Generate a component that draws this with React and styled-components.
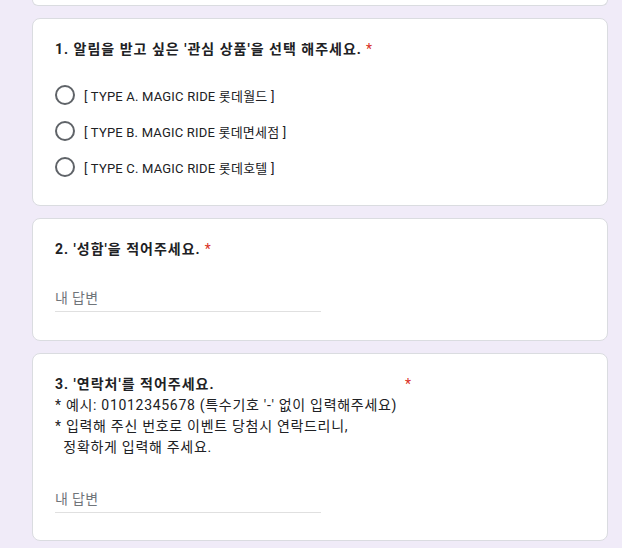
import React from 'react';
import styled, { createGlobalStyle } from 'styled-components';

const GlobalStyle = createGlobalStyle`
    html, body {
        margin: 0;
        padding: 0;
        background: #f0ebf8;
    }
    body {
        font-family: Roboto, 'Noto Sans CJK KR', sans-serif;
        color: #202124;
    }
`;

const Page = styled.div`
    width: 622px;
    height: 548px;
    overflow: hidden;
    padding-left: 32px;
    box-sizing: border-box;
`;

const Column = styled.div`
    width: 576px;
    display: flex;
    flex-direction: column;
    gap: 12px;
`;

// tail of the card above, cut off by the top of the window
const CardTail = styled.div`
    height: 6px;
    background: #fff;
    border: 1px solid #dadce0;
    border-top: none;
    border-radius: 0 0 8px 8px;
    box-sizing: border-box;
`;

const Card = styled.div`
    background: #fff;
    border: 1px solid #dadce0;
    border-radius: 8px;
    padding: 20px 22px 20px;
    box-sizing: border-box;
    height: ${(p) => p.$height}px;
`;

const Title = styled.div`
    font-size: 14px;
    line-height: 21px;
    font-weight: 700;
    letter-spacing: 1px;
    display: flex;
`;

const TitleText = styled.span`
    display: inline-block;
    width: ${(p) => (p.$width ? `${p.$width}px` : 'auto')};
`;

const Required = styled.span`
    color: #d93025;
    font-weight: 400;
    margin-left: 4px;
`;

const Description = styled.div`
    font-size: 14px;
    line-height: 21px;
    letter-spacing: 0.7px;
    white-space: pre-wrap;
`;

const Options = styled.div`
    margin-top: 17px;
    display: flex;
    flex-direction: column;
`;

const Option = styled.label`
    height: 36px;
    display: flex;
    align-items: center;
    gap: 9px;
    cursor: pointer;
`;

const Radio = styled.span`
    width: 20px;
    height: 20px;
    border: 2px solid #5f6368;
    border-radius: 50%;
    box-sizing: border-box;
    flex: none;
`;

const OptionText = styled.span`
    font-size: 13px;
    letter-spacing: 0.2px;
    color: #202124;
`;

const Answer = styled.div`
    margin-top: ${(p) => p.$top}px;
    width: 266px;
    border-bottom: 1px solid #e0e0e0;
    padding-bottom: 3px;
    font-size: 14px;
    line-height: 20px;
    letter-spacing: 0.3px;
    color: #70757a;
`;

const options = [
    '[ TYPE A. MAGIC RIDE 롯데월드 ]',
    '[ TYPE B. MAGIC RIDE 롯데면세점 ]',
    '[ TYPE C. MAGIC RIDE 롯데호텔 ]',
];

export default function App() {
    return (
        <Page>
            <GlobalStyle />
            <Column>
                <CardTail />

                <Card $height={188}>
                    <Title>
                        <TitleText>1. 알림을 받고 싶은 '관심 상품'을 선택 해주세요.</TitleText>
                        <Required>*</Required>
                    </Title>
                    <Options>
                        {options.map((o) => (
                            <Option key={o}>
                                <Radio />
                                <OptionText>{o}</OptionText>
                            </Option>
                        ))}
                    </Options>
                </Card>

                <Card $height={123}>
                    <Title>
                        <TitleText>2. '성함'을 적어주세요.</TitleText>
                        <Required>*</Required>
                    </Title>
                    <Answer $top={28}>내 답변</Answer>
                </Card>

                <Card $height={188}>
                    <Title>
                        <TitleText $width={346}>3. '연락처'를 적어주세요.</TitleText>
                        <Required>*</Required>
                    </Title>
                    <Description>
                        {"* 예시: 01012345678 (특수기호 '-' 없이 입력해주세요)\n* 입력해 주신 번호로 이벤트 당첨시 연락드리니,\n  정확하게 입력해 주세요."}
                    </Description>
                    <Answer $top={31}>내 답변</Answer>
                </Card>
            </Column>
        </Page>
    );
}
